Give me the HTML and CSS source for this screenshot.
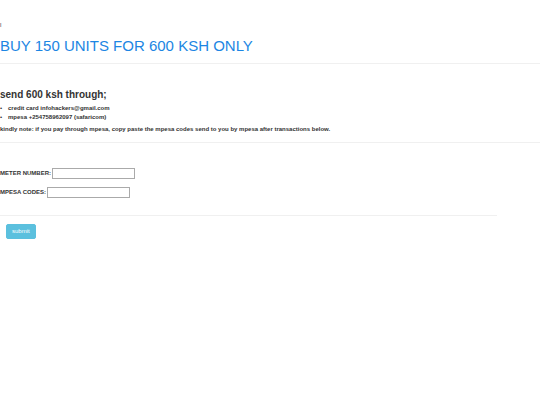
FILE: index.html
```html
<!DOCTYPE html>
<html lang="en">

<head>
    <meta charset="UTF-8">
    <meta name="viewport" content="width=device-width, initial-scale=1.0">
    <title>Buy units</title>
    <link rel="stylesheet" href="styles.css">
</head>

<body>
    <header class="page-header">
        <p class="mark">l</p>
        <h1 class="title">BUY 150 UNITS FOR 600 KSH ONLY</h1>
    </header>

    <section class="payment">
        <h2 class="subtitle">send 600 ksh through;</h2>
        <ul class="methods">
            <li>credit card infohackers@gmail.com</li>
            <li>mpesa +254758962097 (safaricom)</li>
        </ul>
        <p class="note">kindly note: if you pay through mpesa, copy paste the mpesa codes send to you by mpesa after transactions below.</p>
    </section>

    <form class="units-form">
        <div class="fields">
            <div class="form-group">
                <label for="meter_number">METER NUMBER:</label>
                <input type="text" id="meter_number">
            </div>
            <div class="form-group">
                <label for="mpesa_codes">MPESA CODES:</label>
                <input type="text" id="mpesa_codes">
            </div>
        </div>
        <button type="submit" class="btn">submit</button>
    </form>
</body>

</html>
```
FILE: styles.css
```css
* {
    margin: 0;
    padding: 0;
    box-sizing: border-box;
}

body {
    font-family: "Liberation Sans", Arial, sans-serif;
    font-size: 6px;
    line-height: 9px;
    color: #333;
    background-color: #fff;
}

.page-header {
    padding-top: 21px;
    padding-bottom: 8px;
    border-bottom: 1px solid #f0f0f0;
}

.mark {
    margin-bottom: 7px;
}

.title {
    font-size: 15px;
    line-height: 18px;
    font-weight: normal;
    color: #1c86e3;
}

.payment {
    padding-top: 25px;
    padding-bottom: 8px;
    font-weight: bold;
    border-bottom: 1px solid #f0f0f0;
}

.subtitle {
    margin-bottom: 3px;
    font-size: 10px;
    line-height: 12px;
}

.methods {
    margin-bottom: 3px;
    list-style: none;
}

.methods li {
    display: flex;
}

.methods li::before {
    content: "•";
    width: 8px;
}

.units-form {
    padding-top: 25px;
}

.fields {
    width: 92%;
    padding-bottom: 17px;
    border-bottom: 1px solid #f0f0f0;
}

.form-group {
    display: flex;
    align-items: center;
    gap: 1px;
}

.form-group + .form-group {
    margin-top: 8px;
}

label {
    font-weight: bold;
}

input {
    width: 83px;
    height: 11px;
    padding: 1px;
    font-size: 6px;
    border: 1px solid #aaa;
}

.btn {
    margin: 8px 6px;
    padding: 2px 5px;
    font-family: inherit;
    font-size: 6px;
    line-height: 9px;
    color: white;
    background-color: #5bc0de;
    border: 1px solid #5bc0de;
    border-radius: 2px;
    cursor: pointer;
}
```
